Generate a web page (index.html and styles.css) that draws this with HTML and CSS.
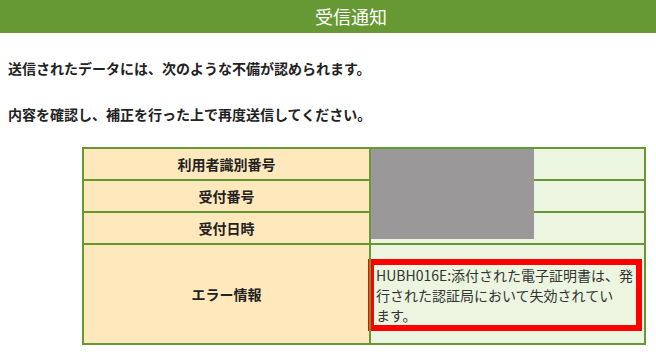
FILE: index.html
```html
<!DOCTYPE html>
<html lang="ja">
<head>
    <meta charset="UTF-8">
    <title>受信通知</title>
    <link rel="stylesheet" href="styles.css">
</head>
<body>
    <header>
        <h1>受信通知</h1>
    </header>

    <div class="content">
        <p class="msg">送信されたデータには、次のような不備が認められます。</p>
        <p class="msg">内容を確認し、補正を行った上で再度送信してください。</p>

        <div class="result">
            <table>
                <tr>
                    <th>利用者識別番号</th>
                    <td></td>
                </tr>
                <tr>
                    <th>受付番号</th>
                    <td></td>
                </tr>
                <tr>
                    <th>受付日時</th>
                    <td></td>
                </tr>
                <tr>
                    <th>エラー情報</th>
                    <td class="error-cell">
                        <div class="error-box">HUBH016E:添付された電子証明書は、発<br>行された認証局において失効されてい<br>ます。</div>
                    </td>
                </tr>
            </table>
            <div class="mask"></div>
        </div>
    </div>
</body>
</html>
```

FILE: styles.css
```css
body {
    margin: 0;
    font-family: "Noto Sans CJK JP", "Liberation Sans", sans-serif;
    color: #222;
    background: #fff;
}

header {
    background-color: #669933;
}

header h1 {
    margin: 0;
    height: 33px;
    line-height: 33px;
    padding-left: 46px;
    font-size: 18px;
    font-weight: normal;
    color: #fff;
    text-align: center;
}

.content {
    padding: 0 8px;
}

.msg {
    margin: 25px 0 0;
    font-size: 14px;
    line-height: 20px;
    font-weight: bold;
}

.msg + .msg {
    margin-top: 26px;
}

.result {
    position: relative;
    width: 564px;
    margin: 23px 0 0 74px;
}

table {
    width: 564px;
    table-layout: fixed;
    border-collapse: collapse;
    border: 2px solid #669933;
}

th,
td {
    border: 2px solid #669933;
    padding: 5px 0;
    line-height: 20px;
    font-size: 14px;
}

th {
    width: 285px;
    background-color: #ffe8bb;
    font-weight: bold;
    color: #222;
    text-align: center;
}

td {
    background-color: #ebf5df;
}

.error-cell {
    padding: 14px 2px 12px 0;
}

.error-box {
    margin-left: -3px;
    border: 6px solid #ff0000;
    padding-left: 2px;
    font-size: 14px;
    line-height: 20px;
    color: #333;
    white-space: nowrap;
}

/* redacted values */
.mask {
    position: absolute;
    left: 289px;
    top: 2px;
    width: 163px;
    height: 90px;
    background-color: #9a9898;
}
```
